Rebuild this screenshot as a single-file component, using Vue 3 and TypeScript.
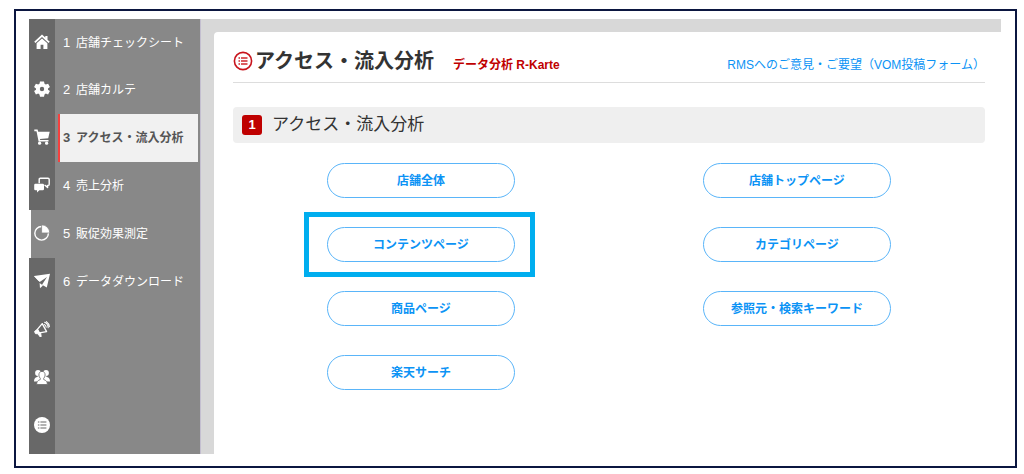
<script setup lang="ts">
interface RailItem {
  id: string
  label: string
}

interface MenuItem {
  no: number
  label: string
}

interface PageLink {
  label: string
  marked?: boolean
}

const railItems: RailItem[] = [
  { id: 'home', label: 'ホーム' },
  { id: 'gear', label: '設定' },
  { id: 'cart', label: '受注' },
  { id: 'chat', label: 'コミュニケーション' },
  { id: 'pie', label: 'データ分析' },
  { id: 'plane', label: 'メール配信' },
  { id: 'horn', label: '広告' },
  { id: 'people', label: 'コミュニティ' },
  { id: 'list', label: 'メニュー一覧' },
]
const currentRail = 'pie'

const menuItems: MenuItem[] = [
  { no: 1, label: '店舗チェックシート' },
  { no: 2, label: '店舗カルテ' },
  { no: 3, label: 'アクセス・流入分析' },
  { no: 4, label: '売上分析' },
  { no: 5, label: '販促効果測定' },
  { no: 6, label: 'データダウンロード' },
]
const currentMenu = 3

const pages: PageLink[] = [
  { label: '店舗全体' },
  { label: '店舗トップページ' },
  { label: 'コンテンツページ', marked: true },
  { label: 'カテゴリページ' },
  { label: '商品ページ' },
  { label: '参照元・検索キーワード' },
  { label: '楽天サーチ' },
]
</script>

<template>
  <div class="frame">
    <div class="app">
      <nav class="rail" aria-label="メイン">
        <a
          v-for="item in railItems"
          :key="item.id"
          href="#"
          class="rail-item"
          :class="{ current: item.id === currentRail }"
          :aria-label="item.label"
        >
          <svg viewBox="0 0 16 16" width="16" height="16" aria-hidden="true">
            <g v-if="item.id === 'home'" fill="#fff">
              <path d="M8 .6.2 7.800l1.300 1.300L8 3.100l6.500 6 1.300-1.300-2.300-2.100V2h-2.200v1.600z" />
              <path d="M8 4.400 2.600 9.300V15h4v-4.200h2.800V15h4V9.300z" />
            </g>
            <path
              v-else-if="item.id === 'gear'"
              fill="#fff"
              fill-rule="evenodd"
              d="M6 .4h4l.5 2.4 1.3.8 2.3-.9 1.8 3.4L14 7.4v1.3l1.9 1.4-1.8 3.3-2.3-.8-1.3.8-.5 2.3H6l-.5-2.3-1.3-.8-2.3.8L.1 10.1 2 8.7V7.4L.1 6l1.8-3.3 2.3.9 1.3-.8zM8 5.8a2.200 2.200 0 1 0 0 4.400 2.200 2.200 0 0 0 0-4.400z"
            />
            <g v-else-if="item.id === 'cart'" fill="#fff">
              <path d="M.3.6h3.300l.6 2.200h11.500l-1.500 6.500-8.300.8.3 1h8.300v1.400H4.600L2.500 2.200H.3z" />
              <circle cx="5.6" cy="14.2" r="1.6" />
              <circle cx="12.6" cy="14.2" r="1.6" />
            </g>
            <g v-else-if="item.id === 'chat'">
              <path
                fill="none"
                stroke="#fff"
                stroke-width="1.4"
                stroke-linejoin="round"
                d="M5.2 6.2V2.4q0-1.2 1.2-1.2h7.6q1.2 0 1.2 1.2v4.8q0 1.2-1.2 1.2h-.4v2.2L11.4 8.4h-1"
              />
              <path
                fill="#fff"
                d="M1.4 6.8h7.4q1.2 0 1.2 1.2v4q0 1.2-1.2 1.2H5.4L3 15.6v-2.4H1.4Q.2 13.2.2 12V8q0-1.2 1.2-1.2z"
              />
            </g>
            <g v-else-if="item.id === 'pie'">
              <circle cx="7.6" cy="8.3" r="6.8" fill="none" stroke="#fff" stroke-width="1.4" />
              <path fill="#fff" stroke="#888" stroke-width=".8" d="M7.600-.2a8.200 8.200 0 0 1 8.200 8.200H7.600z" />
            </g>
            <g v-else-if="item.id === 'plane'" fill="#fff">
              <path d="M0 3 16 .8 12.8 14.6 8 11.8 13 4 5.7 9z" />
              <path d="M0 3 12.2 3.4 4.6 8z" />
              <path d="M5.6 10 9 12.6l-3 2.6z" />
            </g>
            <g
              v-else-if="item.id === 'horn'"
              stroke="#fff"
              stroke-linejoin="round"
              stroke-linecap="round"
            >
              <path fill="none" stroke-width="1.3" d="M3.4 8.4 8.2 2.6l4.4 8-7.2 1.2z" />
              <path
                fill="#fff"
                stroke-width="1"
                d="M3 8.6.6 10.4l.8 2.2 2.8.2 1.6 2.8h1.4l-.6-3.6-1.2-.4z"
              />
              <path
                fill="none"
                stroke-width="1.1"
                d="M10.2 3.4q1.8.6 2 2.9M10.6 1.3q3.2 1 3.6 5.4M12.4.6q2.6 1.6 3 5.2"
              />
            </g>
            <g v-else-if="item.id === 'people'" fill="#fff">
              <circle cx="4" cy="4" r="2.9" />
              <circle cx="12" cy="4" r="2.9" />
              <path d="M0 12.400Q0 8.800 3 8l2-1.400h6L13 8q3 .8 3 4.400z" />
              <path
                stroke="#686868"
                stroke-width=".8"
                d="M8 2.400c2.100 0 3.100 1.500 3.100 3.600 0 1.500-.6 2.600-1.400 3.300v1.200l2 1q1.700.7 1.700 4H2.600q0-3.300 1.700-4l2-1V9.300C5.500 8.600 4.900 7.500 4.900 6c0-2.100 1-3.600 3.100-3.600z"
              />
            </g>
            <g v-else>
              <circle cx="8" cy="8" r="8" fill="#fff" />
              <path
                stroke="#686868"
                stroke-width="1.2"
                d="M3.9 5h1.5M6.4 5h6M3.9 8h1.5M6.4 8h6M3.9 11h1.5M6.4 11h6"
              />
            </g>
          </svg>
        </a>
      </nav>

      <nav class="menu" aria-label="データ分析">
        <a
          v-for="item in menuItems"
          :key="item.no"
          href="#"
          class="menu-item"
          :class="{ active: item.no === currentMenu }"
        >
          <span class="menu-no">{{ item.no }}</span>
          <span>{{ item.label }}</span>
        </a>
      </nav>

      <div class="stage">
        <main class="panel">
          <header class="head">
            <svg class="head-icon" viewBox="0 0 20 20" width="20" height="20" aria-hidden="true">
              <circle cx="10" cy="10" r="8.6" fill="none" stroke="#c8141c" stroke-width="1.6" />
              <path
                stroke="#d0282e"
                stroke-width="1.3"
                d="M5.5 7H7M8 7h6.500M5.500 10H7M8 10h6.500M5.500 13H7M8 13h6.500"
              />
            </svg>
            <h1>アクセス・流入分析</h1>
            <span class="product">データ分析 R-Karte</span>
            <a class="feedback" href="#">RMSへのご意見・ご要望（VOM投稿フォーム）</a>
          </header>

          <h2 class="section">
            <span class="badge">1</span>
            <span>アクセス・流入分析</span>
          </h2>

          <ul class="pages">
            <li v-for="page in pages" :key="page.label">
              <a href="#" class="pill" :class="{ marked: page.marked }">{{ page.label }}</a>
            </li>
          </ul>
        </main>
      </div>
    </div>
  </div>
</template>

<style>
body {
  margin: 0;
  background: #fff;
}
</style>

<style scoped>
.frame {
  box-sizing: border-box;
  margin: 9px 7px 0 14px;
  padding: 8px 14px 12px 13px;
  border: 2px solid #0b1640;
  font-family: "Liberation Sans", "Noto Sans CJK JP", sans-serif;
  font-size: 12px;
  line-height: 16px;
}

a {
  text-decoration: none;
}

.app {
  display: flex;
}

.rail {
  flex: none;
  width: 26px;
  padding-bottom: 4px;
  background: #686868;
}

.rail-item {
  box-sizing: border-box;
  display: flex;
  align-items: center;
  justify-content: center;
  height: 48px;
  padding-bottom: 2px;
}

.rail-item:first-child,
.menu-item:first-child {
  height: 47px;
}

.rail-item.current {
  border-left: 2px solid #fff;
  padding-right: 2px;
  background: #888;
}

.rail-item svg {
  flex: none;
}

.menu {
  flex: none;
  box-sizing: border-box;
  width: 145px;
  padding: 0 2px 0 3px;
  background: #888;
}

.menu-item {
  box-sizing: border-box;
  display: flex;
  align-items: center;
  gap: 5px;
  height: 48px;
  padding-left: 3px;
  border-left: 2px solid transparent;
  color: #fff;
  white-space: nowrap;
}

.menu-no {
  width: 8px;
  font-size: 13px;
}

.menu-item.active {
  border-left-color: #f5413f;
  background: #f1f1f1;
  color: #555;
  font-weight: bold;
}

.stage {
  flex: 1;
  min-width: 0;
  display: flex;
  border-left: 1px solid #c4bfd0;
  padding: 13px 0 0 13px;
  background: #d8d8d8;
}

.panel {
  flex: 1;
  min-width: 0;
  padding: 0 16px 0 19px;
  border-top-left-radius: 4px;
  background: #fff;
}

.head {
  display: flex;
  align-items: center;
  box-sizing: border-box;
  height: 51px;
  padding-top: 8px;
  border-bottom: 1px solid #ddd;
  white-space: nowrap;
}

.head-icon {
  flex: none;
  margin-right: 2px;
}

h1 {
  margin: 0 19px 0 0;
  color: #333;
  font-size: 20px;
  line-height: 24px;
}

.product,
.feedback {
  padding-top: 8px;
}

.product {
  color: #bf0000;
  font-weight: bold;
}

.feedback {
  margin-left: auto;
  color: #0b93f5;
}

.section {
  display: flex;
  align-items: center;
  gap: 10px;
  height: 36px;
  margin: 24px 0 0;
  padding-left: 9px;
  border-radius: 4px;
  background: #efefef;
  color: #333;
  font-size: 17px;
  font-weight: normal;
  line-height: 24px;
}

.badge {
  width: 20px;
  height: 20px;
  border-radius: 3px;
  background: #bf0000;
  color: #fff;
  font-size: 13px;
  font-weight: bold;
  line-height: 20px;
  text-align: center;
}

.pages {
  display: grid;
  grid-template-columns: 1fr 1fr;
  row-gap: 29px;
  margin: 20px 0 0;
  padding: 0;
  list-style: none;
}

.pages li {
  display: flex;
  justify-content: center;
}

.pill {
  position: relative;
  box-sizing: border-box;
  width: 50%;
  padding: 9px 0 8px;
  border: 1px solid #5ab5f9;
  border-radius: 18px;
  color: #0b93f5;
  font-weight: bold;
  text-align: center;
  white-space: nowrap;
}

.pill.marked::after {
  content: "";
  position: absolute;
  inset: -16px -21px -16px -24px;
  border: 5px solid #00aeef;
}
</style>
